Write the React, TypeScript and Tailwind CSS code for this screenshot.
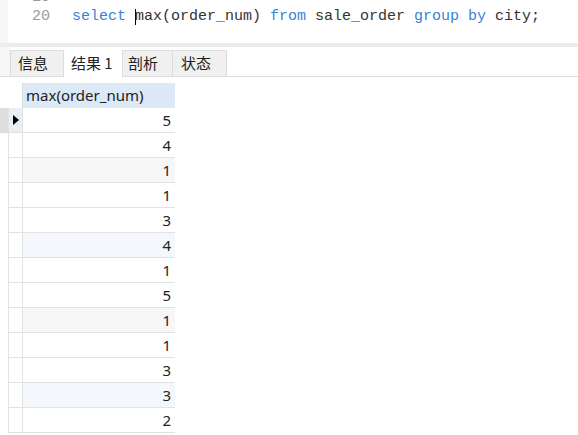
import React from 'react';

const mono = { fontFamily: '"Liberation Mono", "DejaVu Sans Mono", monospace' };

const values = [5, 4, 1, 1, 3, 4, 1, 5, 1, 1, 3, 3, 2];

const rowBg = (i: number) => {
    if (i % 6 === 2) return 'bg-[#f7f7f7]';
    if (i % 6 === 5) return 'bg-[#f4f8fd]';
    return 'bg-white';
};

export default function App() {
    return (
        <div className="w-[578px] h-[435px] bg-white overflow-hidden flex flex-col font-['Noto_Sans','Noto_Sans_CJK_SC',sans-serif] text-[#222]">
            {/* Editor */}
            <div className="h-[43px] flex overflow-hidden shrink-0">
                <div className="w-[8px] bg-[#f6f6f6]" />
                <div className="w-[42px] text-right text-[15px] leading-[19px] text-[#9a9a9a] -mt-[12px]" style={mono}>
                    <div>19</div>
                    <div>20</div>
                </div>
                <div className="pl-[22px] text-[15px] leading-[19px] -mt-[12px] whitespace-pre" style={mono}>
                    <div>&nbsp;</div>
                    <div className="flex items-center">
                        <span className="text-[#3b82d6]">select </span>
                        <span className="inline-block w-px h-[16px] bg-black -mr-px" />
                        <span className="text-[#333]">max(order_num) </span>
                        <span className="text-[#3b82d6]">from </span>
                        <span className="text-[#333]">sale_order </span>
                        <span className="text-[#3b82d6]">group by </span>
                        <span className="text-[#333]">city;</span>
                    </div>
                </div>
            </div>

            {/* Splitter */}
            <div className="h-[4px] bg-[#ececec] shrink-0" />

            {/* Tabs */}
            <div className="h-[30px] flex shrink-0">
                <div className="w-[10px] bg-[#f6f6f6] border-b border-[#dcdcdc]" />
                <div className="flex-1 flex items-end border-b border-[#dcdcdc] text-[15px] font-['Noto_Sans_CJK_SC',sans-serif]">
                    <div className="w-[54px] h-[26px] flex items-center pl-[7px] bg-[#f0f0f0] border border-b-0 border-[#dcdcdc] text-[#222]">信息</div>
                    <div className="w-[58px] h-[27px] -mb-px flex items-center pl-[7px] bg-white text-[#222]">结果 1</div>
                    <div className="w-[51px] h-[26px] flex items-center pl-[5px] bg-[#f0f0f0] border border-b-0 border-[#dcdcdc] text-[#222]">剖析</div>
                    <div className="w-[54px] h-[26px] flex items-center pl-[8px] bg-[#f0f0f0] border border-b-0 border-l-0 border-[#dcdcdc] text-[#222]">状态</div>
                </div>
            </div>

            {/* Grid */}
            <div className="flex pt-[6px]">
                <div className="w-[8px] flex flex-col">
                    <div className="h-[25px]" />
                    <div className="h-[25px] bg-[#dedede]" />
                </div>
                <div className="flex flex-col">
                    <div className="flex h-[25px]">
                        <div className="w-[15px] border-r border-[#dcdcdc]" />
                        <div className="w-[152px] bg-[#dce9f7] pl-[3px] flex items-center text-[15px] text-[#222]">max(order_num)</div>
                    </div>
                    {values.map((v, i) => (
                        <div key={i} className="flex h-[25px]">
                            <div className={`w-[15px] border-r border-b border-l border-[#e2e2e2] flex items-center justify-center ${i === 0 ? 'bg-[#e6f0fb]' : 'bg-white'}`}>
                                {i === 0 && (
                                    <svg width="6" height="10" viewBox="0 0 6 10">
                                        <path d="M0 0 L6 5 L0 10 Z" fill="#000" />
                                    </svg>
                                )}
                            </div>
                            <div className={`w-[152px] border-b border-[#e2e2e2] flex items-center justify-end pr-[4px] text-[15px] text-[#222] ${rowBg(i)}`}>
                                {v}
                            </div>
                        </div>
                    ))}
                </div>
            </div>
        </div>
    );
}
